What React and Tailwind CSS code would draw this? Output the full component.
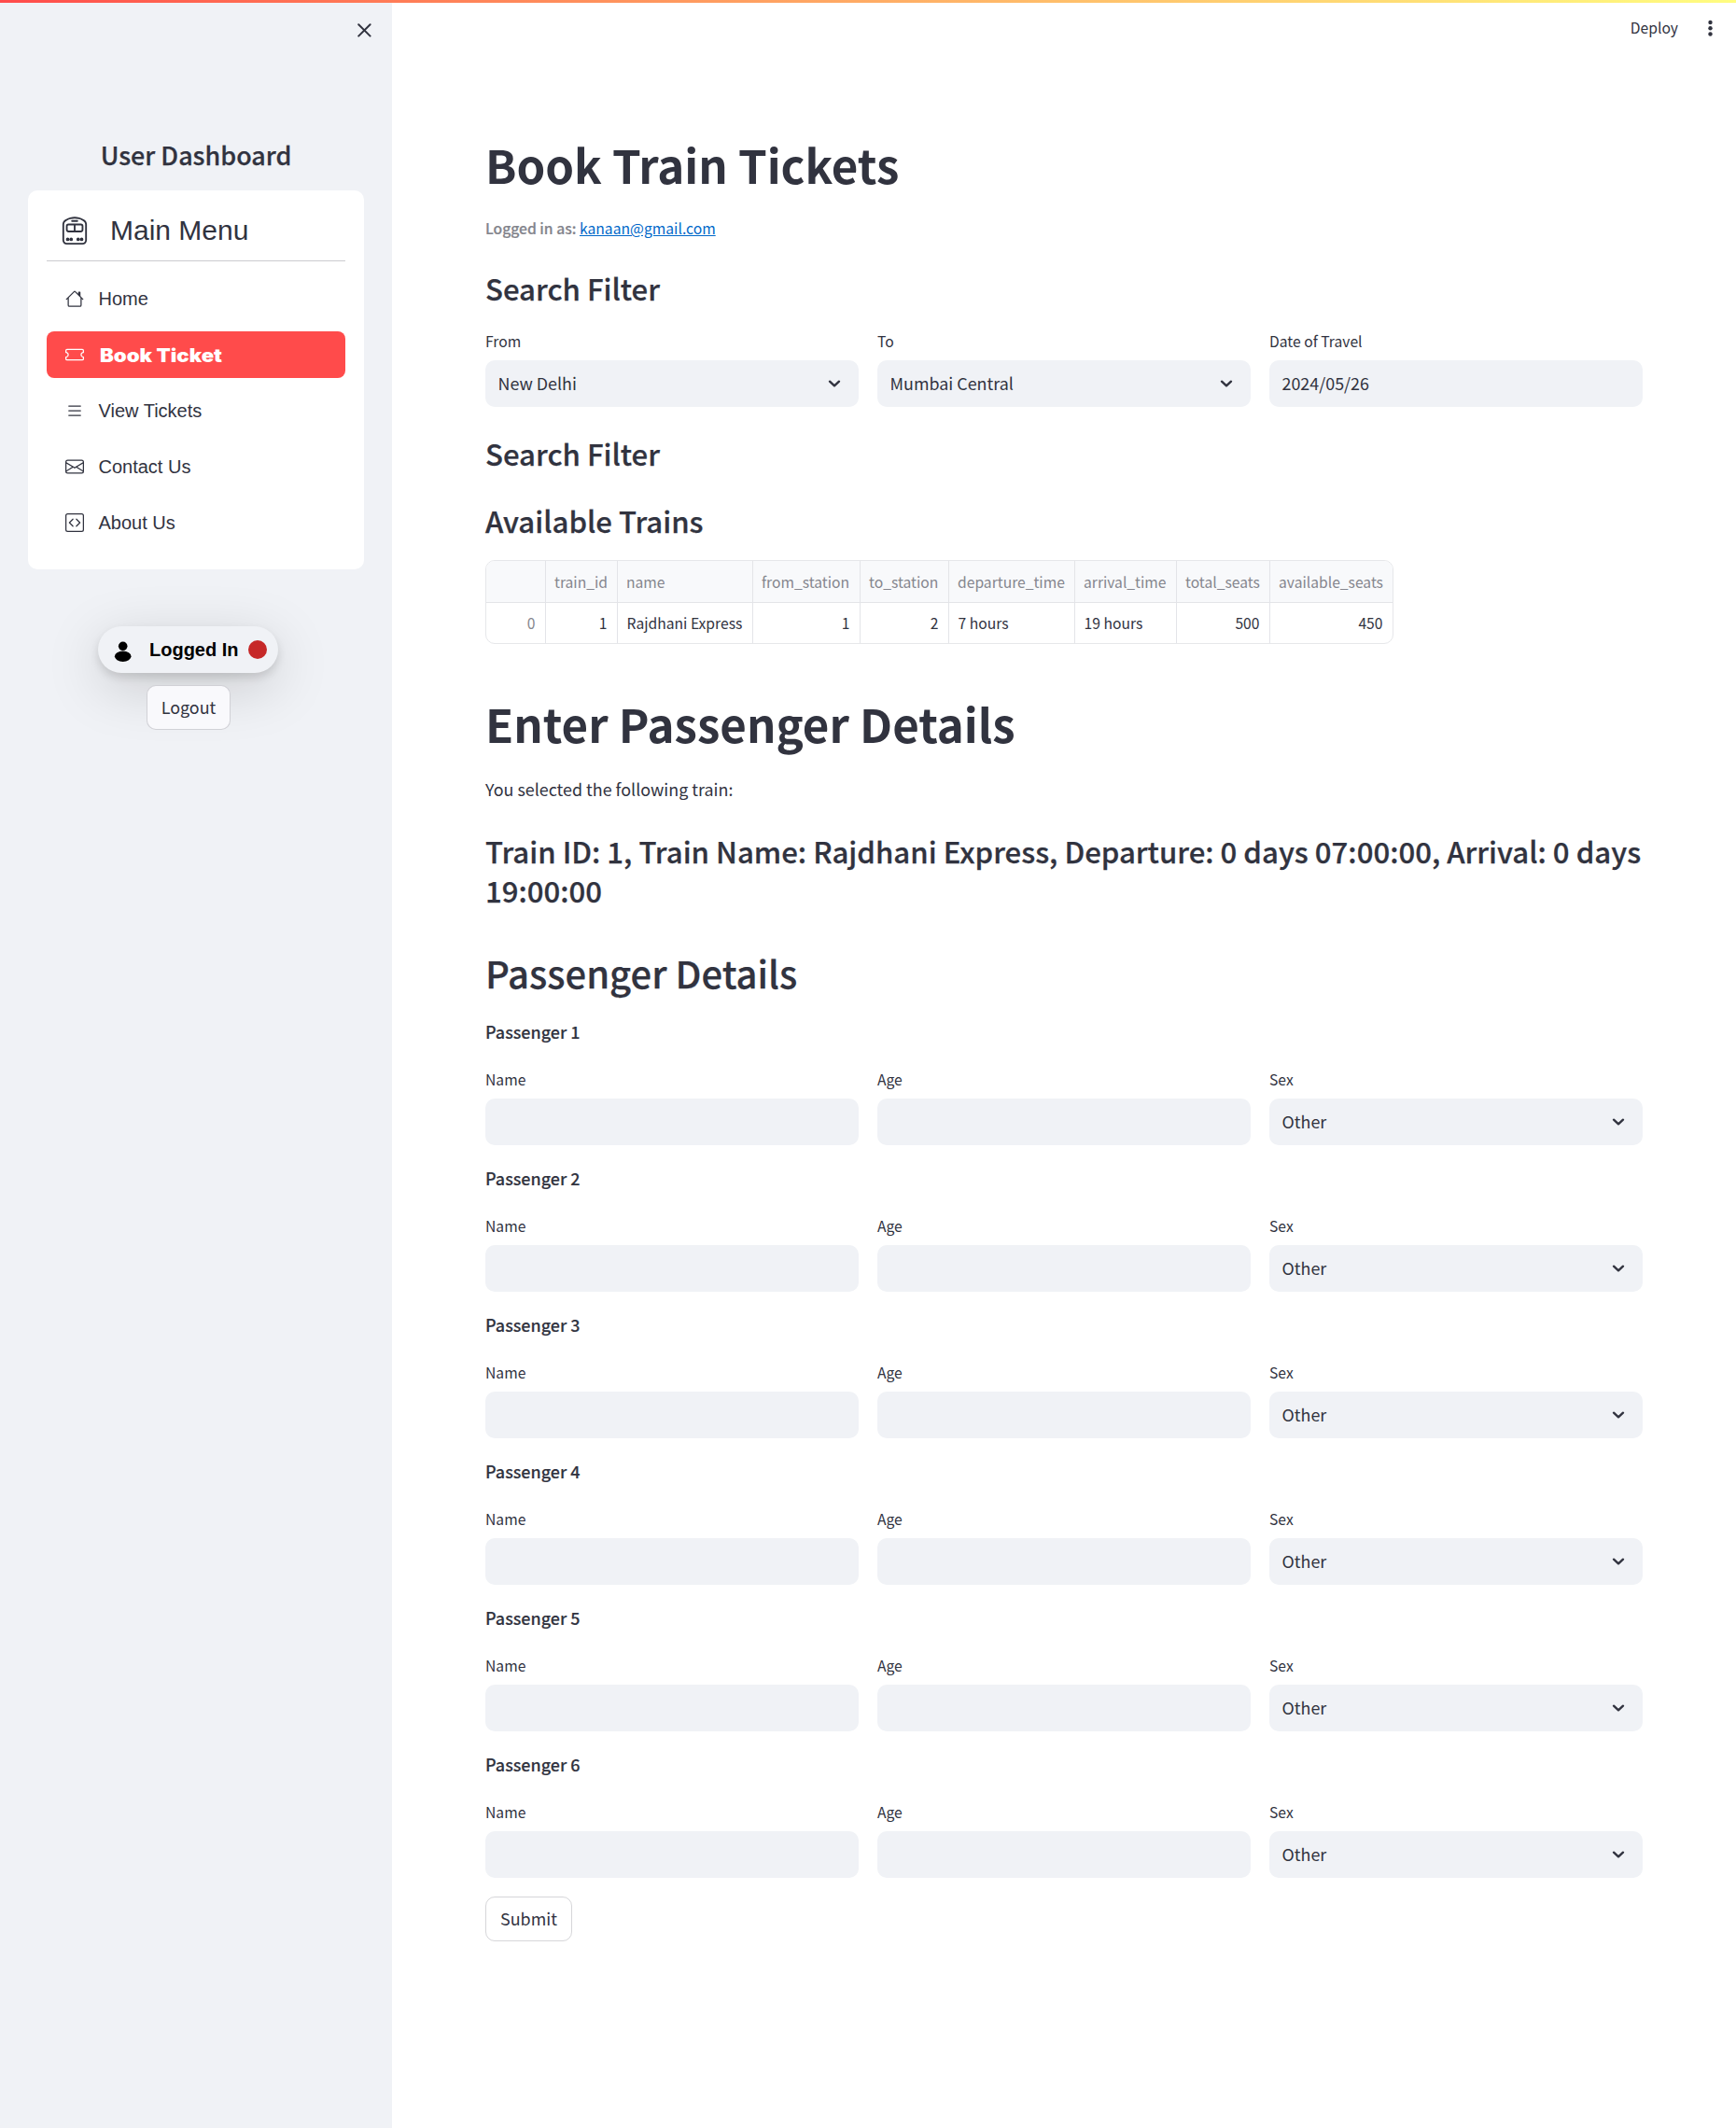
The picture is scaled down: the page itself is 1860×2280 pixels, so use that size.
import React from "react";
import { BsTrainFront, BsHouse, BsTicket, BsList, BsEnvelope, BsCodeSquare } from "react-icons/bs";

const menu = [
  { label: "Home", Icon: BsHouse },
  { label: "Book Ticket", Icon: BsTicket, active: true },
  { label: "View Tickets", Icon: BsList },
  { label: "Contact Us", Icon: BsEnvelope },
  { label: "About Us", Icon: BsCodeSquare },
];

const columns = [
  { head: "", value: "0", width: "w-[64px]", right: true, muted: true },
  { head: "train_id", value: "1", width: "w-[77px]", right: true },
  { head: "name", value: "Rajdhani Express", width: "w-[145px]" },
  { head: "from_station", value: "1", width: "w-[115px]", right: true },
  { head: "to_station", value: "2", width: "w-[95px]", right: true },
  { head: "departure_time", value: "7 hours", width: "w-[135px]" },
  { head: "arrival_time", value: "19 hours", width: "w-[109px]" },
  { head: "total_seats", value: "500", width: "w-[100px]", right: true },
  { head: "available_seats", value: "450", width: "w-[131px]", right: true },
];

function Chevron() {
  return (
    <svg className="mr-[16px] h-5 w-5" viewBox="0 0 20 20" fill="none" stroke="#31333f" strokeWidth="2.4" strokeLinecap="round" strokeLinejoin="round">
      <path d="M5 7.7 10 12.3 15 7.7" />
    </svg>
  );
}

function Field({ label, value, select }) {
  return (
    <div className="w-[400px]">
      <div className="h-6 text-[15.67px] leading-6">{label}</div>
      <div className="mt-2 flex h-[50px] items-center justify-between rounded-[10px] bg-[#f0f2f6] pl-[13.5px]">
        <span className="pb-[2px] text-[17.9px] leading-[28px]">{value}</span>
        {select && <Chevron />}
      </div>
    </div>
  );
}

function Subheading({ children, className }) {
  return (
    <h3 className={`whitespace-nowrap text-[31.17px] font-medium leading-[42px] [-webkit-text-stroke:0.25px] ${className}`}>
      {children}
    </h3>
  );
}

function Sidebar() {
  return (
    <aside className="h-[2280px] w-[420px] shrink-0 bg-[#f0f2f6] px-[30px] pt-[25px]">
      <div className="flex justify-end">
        <svg className="-mr-[8px] h-[15px] w-[15px]" viewBox="0 0 15 15" stroke="#31333f" strokeWidth="2" strokeLinecap="round">
          <path d="M1.2 1.2 13.6 13.6M13.6 1.2 1.2 13.6" />
        </svg>
      </div>
      <h2 className="mt-[108px] text-center text-[26.9px] font-medium leading-9 [-webkit-text-stroke:0.25px]">User Dashboard</h2>
      <nav className="mt-[20px] h-[406px] rounded-[10px] bg-white px-5 pt-5 font-['Liberation_Sans',sans-serif]">
        <div className="flex h-[45px] items-center pl-[15px]">
          <BsTrainFront className="h-[30px] w-[30px]" />
          <span className="ml-[23px] text-[30px] leading-[45px]">Main Menu</span>
        </div>
        <div className="mt-[10px] h-px bg-[#cbcbcf]" />
        <ul className="mt-[15px] flex flex-col gap-[10px]">
          {menu.map(({ label, Icon, active }) => (
            <li
              key={label}
              className={
                active
                  ? "flex h-[50px] items-center rounded-[8px] bg-[#ff4b4b] pl-5 text-white"
                  : "flex h-[50px] items-center rounded-[8px] pl-5"
              }
            >
              <Icon className="h-5 w-5" />
              <span
                className={
                  active
                    ? "ml-[17px] inline-block origin-left scale-x-[1.11] pt-px font-['Inter',sans-serif] text-[20px] font-black leading-[30px]"
                    : "ml-[15.5px] text-[20px] leading-[30px]"
                }
              >
                {label}
              </span>
            </li>
          ))}
        </ul>
      </nav>
      <div className="mt-[61px] flex flex-col">
        <div className="ml-[75px] flex h-[50px] w-[193px] items-center rounded-full bg-[#f0f2f6] pl-[17px] font-['Liberation_Sans',sans-serif] text-black shadow-[0_5px_10px_rgba(0,0,0,0.13),0_15px_60px_rgba(0,0,0,0.17)]">
          <svg className="mt-1 h-[23px] w-[20px]" viewBox="0 0 20 23" fill="currentColor">
            <circle cx="9.7" cy="5.3" r="4.8" />
            <ellipse cx="9.7" cy="16.3" rx="8.8" ry="5.7" />
          </svg>
          <span className="ml-[18px] text-[20px] font-bold leading-[30px]">Logged In</span>
          <span className="ml-[10px] h-5 w-5 rounded-full bg-[#c62828]" />
        </div>
        <button className="relative ml-[127px] mt-[13px] h-[48px] w-[90px] rounded-[10px] border border-[#31333f33] bg-[#f9f9fc] pb-[2px] text-[17.9px] leading-[28px]">
          Logout
        </button>
      </div>
    </aside>
  );
}

export default function App() {
  return (
    <div className="flex h-[2280px] w-[1860px] bg-white font-['Noto_Sans_CJK_SC','Noto_Sans',sans-serif] text-[#31333f]">
      <div className="absolute left-0 top-0 h-[3px] w-[1860px] bg-linear-to-r from-[#ff4b4b] to-[#fffd80]" />
      <Sidebar />
      <main className="flex-1">
        <div className="flex h-[60px] items-center justify-end pr-[20px]">
          <span className="text-[15.67px] leading-6">Deploy</span>
          <svg className="ml-[27px] h-5 w-[15px]" viewBox="0 0 15 20" fill="#31333f">
            <circle cx="7.5" cy="4" r="2.2" />
            <circle cx="7.5" cy="10.3" r="2.2" />
            <circle cx="7.5" cy="16.5" r="2.2" />
          </svg>
        </div>
        <div className="ml-[100px] w-[1240px] pt-[83px]">
          <h1 className="text-[49.2px] font-bold leading-[66px]">Book Train Tickets</h1>
          <p className="mt-[22px] text-[15.7px] font-medium leading-7 text-[#83848c]">
            <span className="[-webkit-text-stroke:0.2px]">Logged in as: </span>
            <a className="font-normal text-[#0068c9] underline">kanaan@gmail.com</a>
          </p>
          <Subheading className="mt-[29px]">Search Filter</Subheading>
          <div className="mt-6 flex gap-5">
            <Field label="From" value="New Delhi" select />
            <Field label="To" value="Mumbai Central" select />
            <Field label="Date of Travel" value="2024/05/26" />
          </div>
          <Subheading className="mt-[29px]">Search Filter</Subheading>
          <Subheading className="mt-[30px]">Available Trains</Subheading>
          <div className="mt-[21px] flex h-[90px] w-[973px] overflow-hidden rounded-[10px] border border-[#e6e7ea] text-[15.67px] leading-[22px]">
            {columns.map((c, i) => (
              <div key={i} className={`${c.width} shrink-0 whitespace-nowrap ${i < 8 ? "border-r border-[#e3e4e8]" : ""} ${c.right ? "text-right" : ""}`}>
                <div className="h-[45px] border-b border-[#e3e4e8] bg-[#f8f9fb] pl-[9px] pr-[11px] pt-[12px] text-[#85868e]">{c.head}</div>
                <div className={`pl-[9.5px] pr-[10.5px] pt-[11px] ${c.muted ? "text-[#85868e]" : ""}`}>{c.value}</div>
              </div>
            ))}
          </div>
          <h1 className="mt-[52px] text-[49.2px] font-bold leading-[66px]">Enter Passenger Details</h1>
          <p className="mt-[22px] text-[17.9px] leading-[30px]">You selected the following train:</p>
          <Subheading className="mt-[31px]">
            Train ID: 1, Train Name: Rajdhani Express, Departure: 0 days 07:00:00, Arrival: 0 days
            <br />
            19:00:00
          </Subheading>
          <h2 className="mt-[40px] text-[40px] font-medium leading-[54px] [-webkit-text-stroke:0.25px]">Passenger Details</h2>
          <div className="mt-[21px] flex flex-col gap-5">
            {[1, 2, 3, 4, 5, 6].map((n) => (
              <section key={n}>
                <p className="text-[17.95px] font-medium leading-[30px] [-webkit-text-stroke:0.15px]">Passenger {n}</p>
                <div className="mt-[25px] flex gap-5">
                  <Field label="Name" />
                  <Field label="Age" />
                  <Field label="Sex" value="Other" select />
                </div>
              </section>
            ))}
          </div>
          <button className="mt-5 h-[48px] w-[93px] rounded-[10px] border border-[#31333f33] pb-[2px] text-[17.9px] leading-[28px]">Submit</button>
        </div>
      </main>
    </div>
  );
}
